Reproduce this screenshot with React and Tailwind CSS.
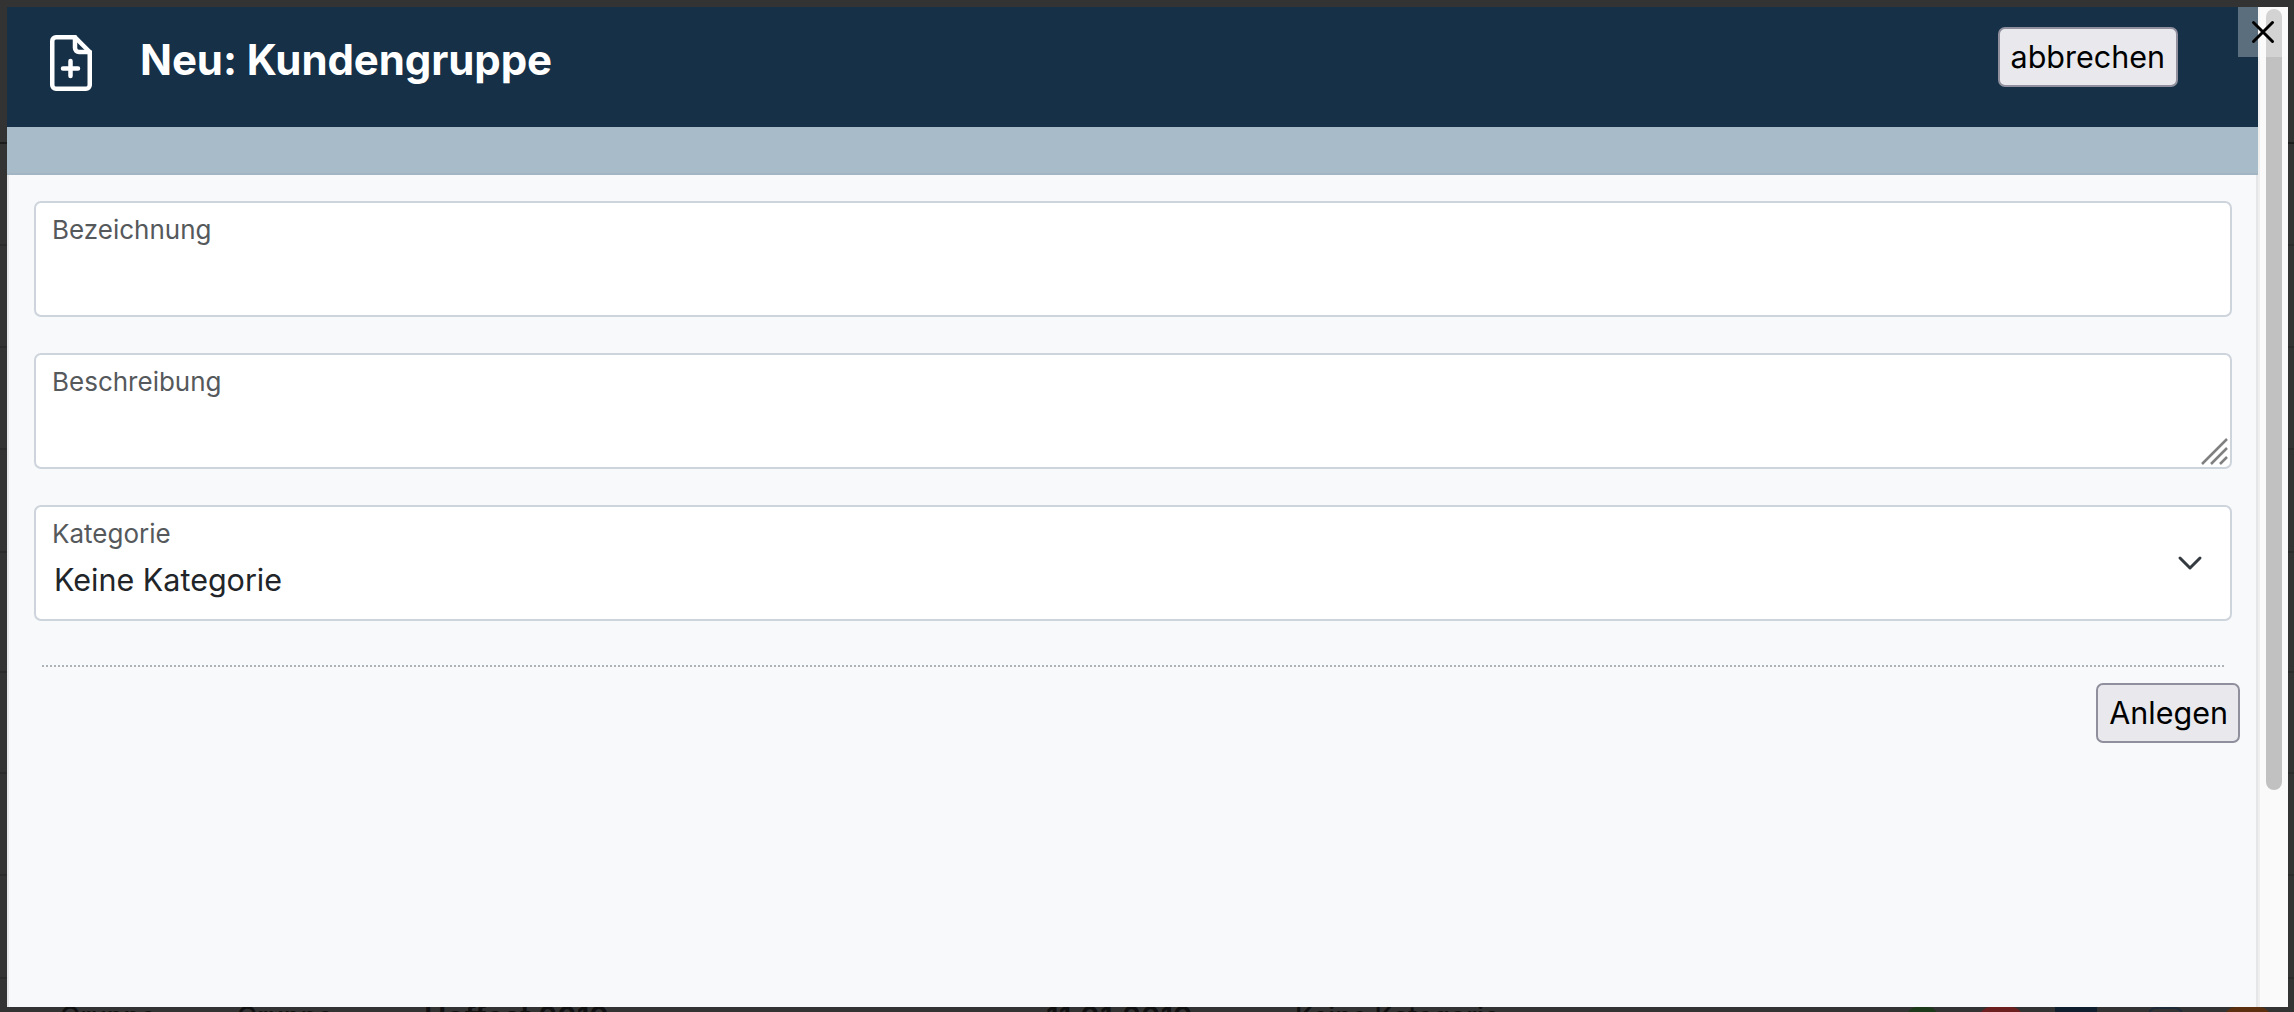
import React from 'react';
import { ChevronDown, X } from 'lucide-react';

const fontFamily = "font-['Inter','Liberation_Sans',sans-serif]";

// rows of the table behind the dialog, only their edges show at the sides
const pageRows = [
    'h-[144px] border-[#1c1c1c]',
    'h-[102px] border-[#2b2b2b]',
    'h-[102px] border-[#2b2b2b]',
    'h-[102px] border-[#2b2b2b]',
    'h-[103px] border-[#2b2b2b]',
    'h-[120px] border-[#2b2b2b]',
    'h-[101px] border-[#2b2b2b]',
    'h-[102px] border-[#2b2b2b]',
    'h-[103px] border-[#2b2b2b]',
];

function FloatingField({ label, children }) {
    return (
        <div className="relative h-[116px] rounded-[7px] border-2 border-[#ced4dc] bg-white">
            <div className="pl-[16px] pt-[9px] text-[26px] leading-[36px] text-[#55595c]">{label}</div>
            {children}
        </div>
    );
}

export default function App() {
    return (
        <div className={`relative h-[1012px] w-[2294px] overflow-hidden bg-[#333333] ${fontFamily}`}>
            {/* page behind the dialog */}
            <div className="flex flex-col">
                {pageRows.map((row, i) => <div key={i} className={`flex-none border-b-2 ${row}`} />)}
                <div className="grid grid-cols-[177px_187px_622px_249px_612px_1fr] pl-[60px] pt-[20px] text-[27px] font-medium leading-[36px] text-[#111111]">
                    <span>Gruppe</span>
                    <span>Gruppe</span>
                    <span className="text-[30px] font-semibold">Hoffest 2019</span>
                    <span className="text-[30px] font-semibold">11.01.2019</span>
                    <span>Keine Kategorie</span>
                    <div className="mt-[8px] flex">
                        <div className="h-[10px] w-[31px] rounded-t-full bg-[#1c3a1a]" />
                        <div className="ml-[42px] h-[10px] w-[42px] rounded-t-full bg-[#6b1f1f]" />
                        <div className="ml-[33px] h-[10px] w-[42px] bg-[#0f1f2e]" />
                        <div className="ml-[51px] h-[10px] w-[35px] rounded-t-[8px] border-2 border-[#1e2a38]" />
                        <div className="ml-[42px] h-[10px] w-[45px] rounded-t-full bg-[#5a3010]" />
                    </div>
                </div>
            </div>

            {/* dialog */}
            <div className="absolute left-[7px] top-[7px] flex h-[1000px] w-[2281px] bg-[#f8f9fa]">
                <div className="flex min-w-0 flex-1 flex-col">
                    <header className="flex h-[120px] flex-none items-start justify-between bg-[#153047] pl-[43px] pr-[80px] pt-[20px]">
                        <div className="mt-[8px] flex items-center">
                            <svg width="42" height="56" viewBox="0 0 42 56" fill="none" stroke="white" strokeWidth="4.5" strokeLinejoin="round" strokeLinecap="round" className="flex-none">
                                <path d="M6 2.250h19L39.750 17v33A3.750 3.750 0 0 1 36 53.750H6A3.750 3.750 0 0 1 2.250 50V6A3.750 3.750 0 0 1 6 2.250z" />
                                <path d="M25 2.250V13a4 4 0 0 0 4 4h10.750" />
                                <path d="M20.500 26v15M13 33.500h15" />
                            </svg>
                            <h1 className="-mt-[7px] ml-[48px] text-[42px] font-bold tracking-[-0.1px] text-white">Neu: Kundengruppe</h1>
                        </div>
                        <button className="h-[60px] rounded-[7px] border-2 border-[#8f8f9d] bg-[#e9e9ed] px-[11px] text-[30.5px] text-black">abbrechen</button>
                    </header>
                    <div className="h-[48px] flex-none border-b-2 border-[#a1b5c2] bg-[#a7bbc8]" />

                    <main className="flex flex-1 flex-col border-x-2 border-[#e5e6e8] pl-[25px] pr-[16px] pt-[26px]">
                        <div className="flex flex-col gap-[36px] pr-[8px]">
                            <FloatingField label="Bezeichnung" />
                            <FloatingField label="Beschreibung">
                                <svg width="28" height="28" viewBox="0 0 28 28" className="absolute bottom-[1px] right-[1px]" stroke="#808080" strokeWidth="2.500">
                                    <path d="M1 26L26 1M10 26L26 10M19 26L26 19" />
                                </svg>
                            </FloatingField>
                            <FloatingField label="Kategorie">
                                <div className="mt-[10px] pl-[18px] text-[30.5px] leading-[36px] text-[#212529]">Keine Kategorie</div>
                                <ChevronDown className="absolute right-[20px] top-[36px] h-[40px] w-[40px] text-[#343a40]" strokeWidth={1.8} />
                            </FloatingField>
                        </div>
                        <div className="ml-[8px] mr-[16px] mt-[44px] border-t-2 border-dotted border-[#b0b3b6]" />
                        <div className="mt-[16px] flex justify-end">
                            <button className="h-[60px] rounded-[7px] border-2 border-[#8f8f9d] bg-[#e9e9ed] pl-[11px] pr-[10px] text-[30.5px] text-black">Anlegen</button>
                        </div>
                    </main>
                </div>
                {/* scrollbar */}
                <div className="w-[30px] flex-none border-l-2 border-[#efefef] bg-[#fafafa] pl-[6px] pr-[6px] pt-[2px]">
                    <div className="h-[781px] rounded-full bg-[#c1c1c1]" />
                </div>
            </div>

            {/* close button sits over the dialog corner */}
            <button className="absolute left-[2238px] top-[7px] flex h-[50px] w-[50px] items-center justify-center bg-[rgba(255,255,255,0.3)]">
                <X className="h-[38px] w-[38px] text-black" strokeWidth={1.9} />
            </button>
        </div>
    );
}
